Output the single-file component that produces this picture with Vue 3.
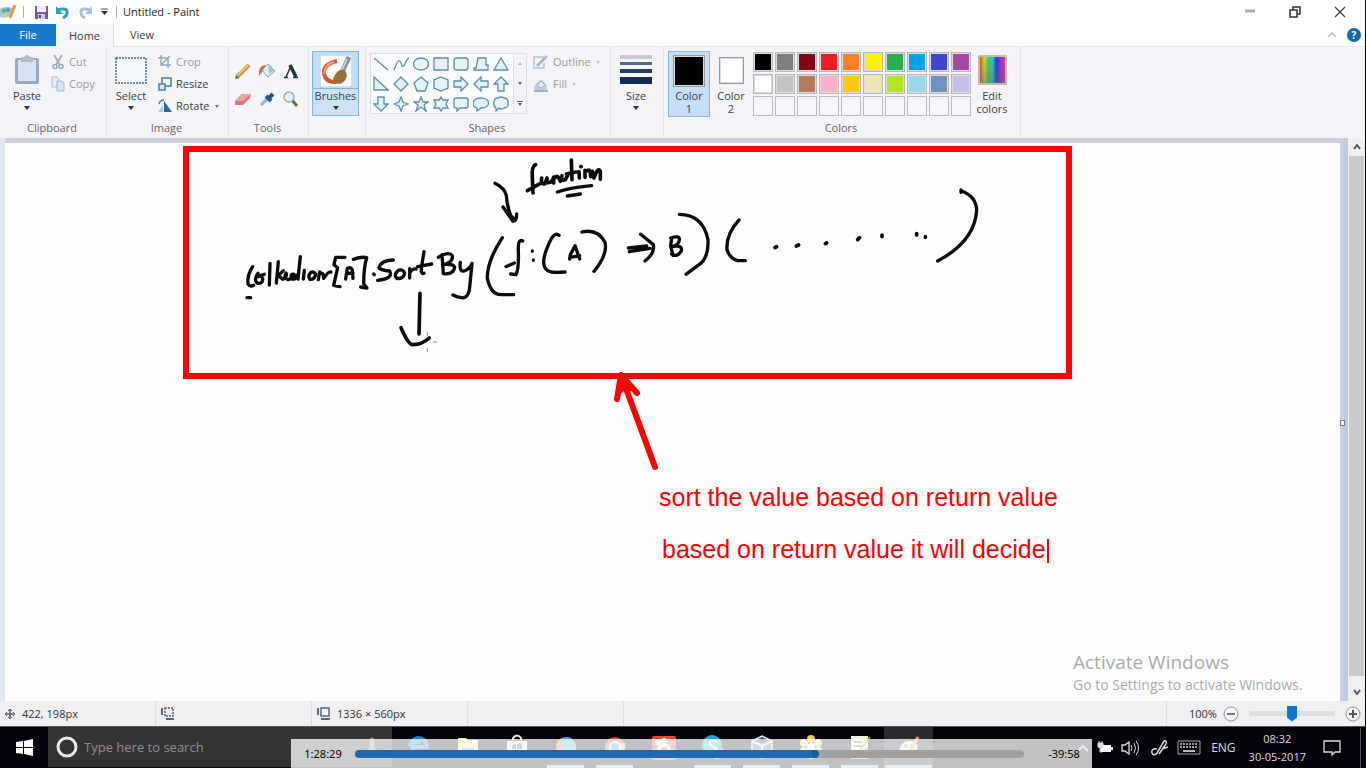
<script setup>
import { ref } from 'vue'

const search = ref('')
const zoom = ref(50)
const position = ref(69)

const shapes = [
  'M1 2 L15 14',
  'M1 14 C6 -1 8 6 9 10 C12 12 13 2 16 2',
  'M8 2 C18 2 18 14 8 14 C-2 14 -2 2 8 2Z',
  'M1 2 H15 V14 H1Z',
  'M4 2 H12 Q15 2 15 5 V11 Q15 14 12 14 H4 Q1 14 1 11 V5 Q1 2 4 2Z',
  'M5 2 H13 V9 H15 V14 H1 V12 H3Z',
  'M8 2 L15 14 H1Z',
  'M1 1 V14 H15Z',
  'M8 1 L15 8 L8 15 L1 8Z',
  'M8 1 L15 7 L12 15 H4 L1 7Z',
  'M8 1 L15 4 V12 L8 15 L1 12 V4Z',
  'M1 5 H8 V1 L15 8 L8 15 V11 H1Z',
  'M15 5 H8 V1 L1 8 L8 15 V11 H15Z',
  'M5 15 V8 H1 L8 1 L15 8 H11 V15Z',
  'M5 1 V8 H1 L8 15 L15 8 H11 V1Z',
  'M8 1 L10 6 L15 8 L10 10 L8 15 L6 10 L1 8 L6 6Z',
  'M8 1 L10 6 H15 L11 9 L13 15 L8 11 L3 15 L5 9 L1 6 H6Z',
  'M8 1 L10 4 H15 L13 8 L15 12 H10 L8 15 L6 12 H1 L3 8 L1 4 H6Z',
  'M3 2 H13 Q15 2 15 4 V10 Q15 12 13 12 H7 L4 15 V12 H3 Q1 12 1 10 V4 Q1 2 3 2Z',
  'M8 2 C18 2 18 12 8 12 L4 15 V12 C-2 10 -1 2 8 2Z',
  'M5 2 Q8 0 11 2 Q15 2 15 6 Q16 12 11 12 Q8 14 6 12 L3 15 V12 Q0 10 1 6 Q1 2 5 2Z',
]

const palette = [
  '#000000', '#7f7f7f', '#880015', '#ed1c24', '#ff7f27', '#fff200', '#22b14c', '#00a2e8', '#3f48cc', '#a349a4',
  '#ffffff', '#c3c3c3', '#b97a57', '#ffaec9', '#ffc90e', '#efe4b0', '#b5e61d', '#99d9ea', '#7092be', '#c8bfe7',
  '', '', '', '', '', '', '', '', '', '',
]

const apps = [
  { name: 'Edge', icon: 'edge' },
  { name: 'File Explorer', icon: 'folder' },
  { name: 'Store', icon: 'store' },
  { name: 'Firefox', icon: 'firefox', open: true },
  { name: 'Chrome', icon: 'chrome', open: true },
  { name: 'Recorder', icon: 'recorder' },
  { name: 'Skype', icon: 'skype', open: true },
  { name: 'VirtualBox', icon: 'box', open: true },
  { name: 'Flower', icon: 'flower', open: true },
  { name: 'Notepad', icon: 'notepad', open: true },
  { name: 'Paint', icon: 'paint', open: true, active: true },
]
</script>

<template>
  <div class="screen">
    <div class="window">
      <header class="titlebar">
        <svg class="app-icon" width="18" height="18" viewBox="0 0 18 18">
          <path d="M0 6 Q6 2 12 5 Q13 13 5 15 L0 14Z" fill="#a9c6cf" />
          <circle cx="4" cy="8" r="2" fill="#68a874" /><circle cx="8" cy="7" r="2" fill="#5797c9" /><circle cx="5" cy="12" r="2" fill="#d8d28e" />
          <path d="M10 15 L15 2" stroke="#dc9b3d" stroke-width="3" />
        </svg>
        <i class="bar"></i>
        <button class="plain quick" aria-label="Save">
          <svg width="15" height="15" viewBox="0 0 15 15"><path d="M1 1H14V14H1Z" fill="#7957a5" /><path d="M3 1H12V7H3Z" fill="#f3effa" /><path d="M4 9H11V14H4Z" fill="#d8cce9" /><path d="M5 10H7V13H5Z" fill="#584081" /></svg>
        </button>
        <button class="plain quick" aria-label="Undo">
          <svg width="16" height="15" viewBox="0 0 16 15"><path d="M3 5 Q13 2 12 8 Q12 11 8 13" fill="none" stroke="#2e9bd0" stroke-width="3" /><path d="M1 1 V9 H8Z" fill="#2e9bd0" /></svg>
        </button>
        <button class="plain quick" aria-label="Redo">
          <svg width="16" height="15" viewBox="0 0 16 15"><path d="M13 5 Q3 2 4 8 Q4 11 8 13" fill="none" stroke="#a9bfd2" stroke-width="3" /><path d="M15 1 V9 H8Z" fill="#a9bfd2" /></svg>
        </button>
        <button class="plain more" aria-label="Customize toolbar">
          <svg width="7" height="8" viewBox="0 0 7 8"><path d="M0 1H7" stroke="#555" /><path d="M0 3H7L3.5 7Z" fill="#333" /></svg>
        </button>
        <i class="bar"></i>
        <h1>Untitled - Paint</h1>
        <div class="controls">
          <button class="plain" aria-label="Minimize"><svg width="12" height="12" viewBox="0 0 12 12"><path d="M1 5H11" stroke="#aaa" stroke-width="3" /></svg></button>
          <button class="plain" aria-label="Restore"><svg width="12" height="12" viewBox="0 0 12 12"><path d="M1 4H8V11H1ZM4 4V1H11V8H8" fill="none" stroke="#333" stroke-width="1.5" /></svg></button>
          <button class="plain" aria-label="Close"><svg width="12" height="12" viewBox="0 0 12 12"><path d="M1 1L11 11M11 1L1 11" stroke="#444" stroke-width="1.4" /></svg></button>
        </div>
      </header>

      <nav class="tabs">
        <button class="plain file">File</button>
        <button class="plain home">Home</button>
        <button class="plain view">View</button>
        <div class="tab-end">
          <button class="plain" aria-label="Collapse ribbon"><svg width="10" height="6" viewBox="0 0 10 6"><path d="M1 5L5 1L9 5" fill="none" stroke="#b5b5ba" stroke-width="1.4" /></svg></button>
          <button class="plain help" aria-label="Help">?</button>
        </div>
      </nav>

      <section class="ribbon">
        <div class="group clipboard">
          <div class="body">
            <button class="plain big">
              <span class="pic"><svg width="26" height="32" viewBox="0 0 26 32"><rect x="1" y="4" width="24" height="26" rx="2" fill="#9ca8c2" /><path d="M4 6H22V27H4Z" fill="#d5e3f5" /><path d="M7 3H10Q13 -1 16 3H19V8H7Z" fill="#b2bbcd" /></svg></span>
              <span>Paste</span><i class="caret"></i>
            </button>
            <div class="rows faded">
              <button class="plain row"><svg width="14" height="16" viewBox="0 0 14 16"><path d="M3 1L9 11M11 1L5 11" stroke="#a3aec0" stroke-width="1.8" /><circle cx="4" cy="12.500" r="2" fill="none" stroke="#98a5bb" stroke-width="1.5" /><circle cx="10" cy="12.500" r="2" fill="none" stroke="#98a5bb" stroke-width="1.5" /></svg>Cut</button>
              <button class="plain row"><svg width="14" height="16" viewBox="0 0 14 16"><path d="M1 1H6L8 4V11H1Z" fill="#e8eef7" stroke="#b2bdcf" /><path d="M6 5H11L13 8V15H6Z" fill="#dce5f2" stroke="#a5b2c8" /></svg>Copy</button>
            </div>
          </div>
          <div class="caption">Clipboard</div>
        </div>

        <div class="group image">
          <div class="body">
            <button class="plain big">
              <span class="pic"><svg width="32" height="28" viewBox="0 0 32 28"><rect x="1" y="2" width="30" height="25" fill="#f5f9fe" stroke="#396fa2" stroke-width="1.500" stroke-dasharray="2 1" /></svg></span>
              <span>Select</span><i class="caret"></i>
            </button>
            <div class="rows">
              <button class="plain row dim"><svg width="14" height="14" viewBox="0 0 14 14"><path d="M3 0V10H13M0 3H10V13M3 10L12 1" fill="none" stroke="#91a6c0" stroke-width="1.5" /></svg>Crop</button>
              <button class="plain row"><svg width="14" height="14" viewBox="0 0 14 14"><path d="M4 1H13V9H4Z" fill="#fff" stroke="#397eb5" stroke-width="1.5" /><path d="M1 7H7V13H1Z" fill="#dceaf8" stroke="#397eb5" stroke-width="1.500" /></svg>Resize</button>
              <button class="plain row"><svg width="14" height="14" viewBox="0 0 14 14"><path d="M6 2L14 13H6Z" fill="#286a9e" /><path d="M5 6V13H0Z" fill="#a6c9e5" /><path d="M1 5Q2 1 6 1" fill="none" stroke="#397eb5" stroke-width="1.500" /></svg>Rotate <i class="caret"></i></button>
            </div>
          </div>
          <div class="caption">Image</div>
        </div>

        <div class="group tools">
          <div class="body tool-grid">
            <button class="plain" aria-label="Pencil"><svg width="18" height="18" viewBox="0 0 18 18"><path d="M3 15L15 3" stroke="#c79548" stroke-width="4" /><path d="M3 14L14 3" stroke="#f1ce85" stroke-width="1.5" /><path d="M1 17L2 13L5 16Z" fill="#715c48" /></svg></button>
            <button class="plain" aria-label="Fill"><svg width="18" height="18" viewBox="0 0 18 18"><path d="M4 8L10 2L17 9L10 15Z" fill="#e5eff8" stroke="#819db8" /><path d="M10 2Q14 4 16 9L11 12Z" fill="#9fc3df" /><path d="M8 3Q2 3 1 9V14Q5 10 6 6Z" fill="#d86a4f" /></svg></button>
            <button class="plain" aria-label="Text"><svg width="18" height="18" viewBox="0 0 18 18"><path d="M4 15L9 4" fill="none" stroke="#1e2d48" stroke-width="1.500" /><path d="M8 3L14 15" stroke="#1e2d48" stroke-width="3.500" /><path d="M2 15.500H6M11 15.500H16" stroke="#1e2d48" stroke-width="1.500" /></svg></button>
            <button class="plain" aria-label="Eraser"><svg width="18" height="18" viewBox="0 0 18 18"><path d="M1 11L8 4L17 4L16 8L9 15L1 15Z" fill="#d97880" /><path d="M1 11L8 4L17 4L9 11Z" fill="#f1a2a5" /></svg></button>
            <button class="plain" aria-label="Color picker"><svg width="18" height="18" viewBox="0 0 18 18"><path d="M3 15L10 8" stroke="#91b7d8" stroke-width="3" /><path d="M8 6L13 11M11 8L15 4" stroke="#275983" stroke-width="4" /></svg></button>
            <button class="plain" aria-label="Magnifier"><svg width="18" height="18" viewBox="0 0 18 18"><path d="M10 10L15 16" stroke="#77604a" stroke-width="3" /><circle cx="7" cy="7" r="5" fill="#e2f0fa" stroke="#9cabb9" stroke-width="1.5" /></svg></button>
          </div>
          <div class="caption">Tools</div>
        </div>

        <div class="group brush-group">
          <div class="body">
            <button class="plain big brushes">
              <span class="pic"><svg width="32" height="32" viewBox="0 0 32 32"><path d="M0 0H32V32H0Z" fill="#fff" stroke="#aac0d8" /><path d="M17 6Q3 9 4 19Q6 28 17 27" fill="none" stroke="#d95730" stroke-width="4" /><path d="M14 7Q5 9 4 19" fill="none" stroke="#f1a17d" stroke-width="2" /><path d="M22 17L29 2" stroke="#8694aa" stroke-width="5" /><path d="M21 17L27 4" stroke="#d5dbe5" stroke-width="1.500" /><path d="M13 24Q17 13 25 15Q30 24 20 29Q15 29 13 24Z" fill="#97703f" /></svg></span>
              <span>Brushes</span><i class="caret"></i>
            </button>
          </div>
        </div>

        <div class="group shapes">
          <div class="body">
            <div class="gallery">
              <div class="shape-grid">
                <button v-for="(d, i) in shapes" :key="i" class="plain" :aria-label="'Shape ' + (i + 1)">
                  <svg width="16" height="16" viewBox="0 0 16 16"><path :d="d" :class="{ open: i < 2 }" /></svg>
                </button>
              </div>
              <div class="gallery-bar">
                <button class="plain" aria-label="Previous shapes"><i class="caret up"></i></button>
                <button class="plain" aria-label="Next shapes"><i class="caret"></i></button>
                <button class="plain last" aria-label="All shapes"><i class="caret"></i></button>
              </div>
            </div>
            <div class="rows faded">
              <button class="plain row"><svg width="16" height="14" viewBox="0 0 16 14"><path d="M11 2H1V13H11V8" fill="none" stroke="#b8c2d1" stroke-width="1.5" /><path d="M4 11L14 1" stroke="#a8b6c8" stroke-width="2.5" /></svg>Outline <i class="caret"></i></button>
              <button class="plain row"><svg width="16" height="15" viewBox="0 0 16 15"><path d="M1 14V9L8 2L14 8V14Z" fill="#c4cfdd" /><path d="M4 9L8 4L12 8L8 11Z" fill="#e8eef5" stroke="#9eafc4" /><path d="M1 14H15" stroke="#9eafc4" stroke-width="2" /></svg>Fill <i class="caret"></i></button>
            </div>
          </div>
          <div class="caption">Shapes</div>
        </div>

        <div class="group size">
          <div class="body">
            <button class="plain big">
              <span class="pic"><svg width="32" height="30" viewBox="0 0 32 30"><path d="M0 2H32" stroke="#c6c9d1" stroke-width="4" /><path d="M0 8.500H32" stroke="#506b80" stroke-width="3" /><path d="M0 16H32" stroke="#243e68" stroke-width="4" /><path d="M0 25.500H32" stroke="#152d55" stroke-width="7" /></svg></span>
              <span>Size</span><i class="caret"></i>
            </button>
          </div>
        </div>

        <div class="group colors">
          <div class="body">
            <button class="plain big color-pick chosen"><span class="pic"><i class="swatch one"></i></span><span>Color<br>1</span></button>
            <button class="plain big color-pick"><span class="pic"><i class="swatch two"></i></span><span>Color<br>2</span></button>
            <div class="palette">
              <button v-for="(c, i) in palette" :key="i" class="plain" :class="{ empty: !c }" :style="{ backgroundColor: c || null }" :aria-label="'Palette color ' + (i + 1)"></button>
            </div>
            <button class="plain big edit"><span class="pic"><i class="spectrum"></i></span><span>Edit<br>colors</span></button>
          </div>
          <div class="caption">Colors</div>
        </div>
      </section>

      <main class="workspace">
        <div class="canvas">
          <svg class="ink" width="1335" height="558" viewBox="5 143 1335 558">
            <g fill="none" stroke="#0b0b0b" stroke-linecap="round" stroke-linejoin="round">
              <g transform="translate(230 150) scale(.33333)" stroke-width="10">
                <path d="M68 350Q51 375 54 402Q60 412 71 406M51 443H62" />
                <path d="M84 370Q70 389 82 400Q99 402 98 386Q93 374 84 380L103 373M120 340L118 405" />
                <path d="M145 335L139 399M160 362L145 377L158 388Q174 377 168 369Q160 386 174 389Q188 387 192 373Q180 370 184 386Q195 392 202 375M211 320L204 387M223 361L220 387" />
                <path d="M242 368Q232 379 240 388Q255 389 257 372Q250 363 242 368M265 389L269 366M267 374Q280 361 281 385Q296 363 303 366" />
                <path d="M345 322H317L312 344L323 353L311 406L330 410M347 387L352 355Q364 350 367 360L369 385M350 371L369 369" />
                <path d="M370 328Q395 319 410 323Q401 354 401 401L411 414L392 411M431 372L433 374" />
                <path d="M490 330Q452 331 447 354Q454 361 479 363Q491 386 443 391M505 361Q489 376 501 385Q521 388 524 369Q518 356 505 361M539 356V384M539 368Q549 354 558 357" />
                <path d="M582 305L575 348Q571 375 582 370M563 350L605 342M636 314L640 370M625 322Q657 303 667 317Q670 335 645 343Q671 341 674 352Q671 375 640 371M691 337Q687 367 703 363Q721 357 726 340Q722 384 718 421Q711 447 694 443Q679 441 669 435" />
                <path stroke-width="11" d="M570 430L567 552M513 533Q534 582 548 584Q576 584 598 564" />
                <path stroke="#aaa" stroke-width="4" d="M592 548V557M592 595V604M611 576H620" />
              </g>
              <g transform="translate(470 150) scale(.33333)" stroke-width="10">
                <path stroke-width="11" d="M197 44Q184 50 187 82L189 129M172 122L210 101" />
                <path stroke-width="11" d="M215 84Q211 104 225 101L231 84V98Q248 99 251 81V99M253 85Q263 70 271 94L276 77Q272 94 286 89L293 76M304 30L306 89M289 72L318 66M327 65L328 84M332 50H334M345 61V82M352 62Q362 55 362 80M367 64L372 84Q384 50 391 63V88" />
                <path d="M262 126Q310 111 365 107M292 138L331 132M75 100Q104 114 109 137Q112 180 130 213M99 171L129 214Q140 213 140 192M104 178L132 207" />
                <path d="M97 263Q51 333 52 385Q63 435 94 434H131M158 273Q143 264 145 304Q147 358 138 374L122 372M108 350L133 339M187 303V304M190 330V331" />
                <path d="M267 256Q251 242 233 290Q209 345 233 362Q249 370 285 366M299 327L301 314L315 287L329 327M300 322L329 317M336 246Q383 235 405 277Q414 313 372 364" />
                <path d="M475 294L530 288M478 305L540 295M512 253L550 284Q555 310 525 333M605 264L602 288L609 316M602 264Q634 254 627 274Q622 288 605 290Q638 283 634 303Q622 323 605 312M628 193Q699 194 714 269Q716 328 684 346L648 373" />
              </g>
              <g transform="translate(700 170) scale(.33333)" stroke-width="10">
                <path d="M117 150Q78 191 81 239Q90 266 112 272H136M784 63Q829 79 830 121Q824 214 713 273M783 60V67" />
                <path stroke-width="11" d="M225 233L230 230M289 228L296 225M376 221L380 219M473 209L479 203M546 195V200M650 191V195M676 200V202" />
              </g>
            </g>
            <rect x="186" y="149" width="883" height="227" fill="none" stroke="#f00" stroke-width="6" />
            <path d="M655 467L621 375M617 399L621 375L637 393" fill="none" stroke="#f00" stroke-width="6" stroke-linecap="round" stroke-linejoin="round" />
            <path d="M621 375L617 397L624 391L635 391Z" fill="#f00" />
          </svg>
          <p class="note first">sort the value based on return value</p>
          <p class="note second">based on return value it will decide<i class="cursor"></i></p>
          <div class="watermark"><strong>Activate Windows</strong><span>Go to Settings to activate Windows.</span></div>
        </div>
        <div class="gutter"><i></i></div>
        <div class="scroll">
          <button class="plain" aria-label="Scroll up"><svg width="8" height="6" viewBox="0 0 8 6"><path d="M1 5L4 1L7 5" fill="none" stroke="#555" stroke-width="2" /></svg></button>
          <i class="thumb"></i>
          <button class="plain down" aria-label="Scroll down"><svg width="8" height="6" viewBox="0 0 8 6"><path d="M1 1L4 5L7 1" fill="none" stroke="#555" stroke-width="2" /></svg></button>
        </div>
      </main>

      <footer class="status">
        <div class="cell"><svg width="12" height="12" viewBox="0 0 12 12"><path d="M6 1V11M1 6H11" stroke="#596777" stroke-width="1.500" /><path d="M4 3L6 1L8 3M4 9L6 11L8 9M3 4L1 6L3 8M9 4L11 6L9 8" fill="none" stroke="#596777" /></svg>422, 198px</div>
        <div class="cell"><svg width="14" height="14" viewBox="0 0 14 14"><path d="M1 1V8M5 12H13" stroke="#526880" stroke-width="2" /><path d="M4 1H12V9H4Z" fill="none" stroke="#526880" stroke-width="1.500" stroke-dasharray="2 1" /></svg></div>
        <div class="cell"><svg width="14" height="14" viewBox="0 0 14 14"><path d="M1 1V8M4 12H13" stroke="#526880" stroke-width="2" /><path d="M4 1H12V9H4Z" fill="#fff" stroke="#526880" stroke-width="1.5" /></svg>1336 × 560px</div>
        <div class="cell"></div>
        <div class="cell rest"></div>
        <div class="zoom">
          <span>100%</span>
          <button class="plain" aria-label="Zoom out"><svg width="16" height="16" viewBox="0 0 16 16"><circle cx="8" cy="8" r="7" fill="#f7f7f7" stroke="#929292" /><path d="M4 8H12" stroke="#777" stroke-width="2" /></svg></button>
          <input v-model="zoom" type="range" aria-label="Zoom">
          <button class="plain" aria-label="Zoom in"><svg width="16" height="16" viewBox="0 0 16 16"><circle cx="8" cy="8" r="7" fill="#f7f7f7" stroke="#929292" /><path d="M4 8H12M8 4V12" stroke="#555" stroke-width="2" /></svg></button>
        </div>
      </footer>
    </div>

    <div class="taskbar">
      <button class="plain start" aria-label="Start"><svg width="17" height="17" viewBox="0 0 17 17"><path d="M0 3L7 2V8H0ZM8 2L17 0V8H8ZM0 9H7V15L0 14ZM8 9H17V17L8 15Z" fill="#fff" /></svg></button>
      <label class="search">
        <svg width="22" height="22" viewBox="0 0 22 22"><circle cx="11" cy="11" r="9" fill="none" stroke="#e8e8e8" stroke-width="3" /></svg>
        <input v-model="search" type="text" placeholder="Type here to search" aria-label="Search">
        <svg width="14" height="20" viewBox="0 0 14 20"><path d="M7 3V11" stroke="#888" stroke-width="5" stroke-linecap="round" /><path d="M2 10Q7 18 12 10M7 14V19" fill="none" stroke="#888" /></svg>
      </label>
      <div class="apps">
        <button v-for="app in apps" :key="app.icon" class="plain" :class="{ running: app.open, active: app.active }" :aria-label="app.name">
          <svg width="24" height="26" viewBox="0 0 24 26">
            <template v-if="app.icon === 'edge'"><path d="M4 13H20Q19 4 11 4Q5 5 3 12Q7 7 14 8M6 13Q5 25 20 21" fill="none" stroke="#1683d8" stroke-width="4" /></template>
            <template v-else-if="app.icon === 'folder'"><path d="M2 4H10L12 6H22V22H2Z" fill="#f3df94" /><path d="M6 14H18V22H15V18H9V22H6Z" fill="#55b5e7" /></template>
            <template v-else-if="app.icon === 'store'"><path d="M8 7V4Q12 -1 16 4V7" fill="none" stroke="#eee" stroke-width="2" /><path d="M2 7H22V24L2 22Z" fill="#f1f1f1" /><path d="M7 11L11 10V15H7ZM12 10L17 9V15H12ZM7 16H11V20L7 19ZM12 16H17V21L12 20Z" fill="#444" /></template>
            <template v-else-if="app.icon === 'firefox'"><circle cx="12" cy="13" r="10" fill="#ed923b" /><circle cx="13" cy="11" r="8" fill="#3b9fd1" /><path d="M4 5Q4 11 11 11L8 16Q14 22 20 13Q21 24 12 24Q0 22 4 5Z" fill="#e7773d" /></template>
            <template v-else-if="app.icon === 'chrome'"><circle cx="12" cy="13" r="10" fill="#db4437" /><path d="M3 8L10 24Q-1 20 3 8Z" fill="#369b5e" /><path d="M12 9H22Q24 22 11 24L17 14Z" fill="#f3c442" /><circle cx="12" cy="13" r="5" fill="#4285d4" stroke="#eee" stroke-width="2" /></template>
            <template v-else-if="app.icon === 'recorder'"><rect x="0" y="2" width="24" height="24" rx="2" fill="#e24a35" /><circle cx="12" cy="16" r="7" fill="#fff" /><circle cx="6" cy="8" r="3" fill="#fff" /><circle cx="12" cy="7" r="3" fill="#fff" /><circle cx="12" cy="16" r="3" fill="#e24a35" /></template>
            <template v-else-if="app.icon === 'skype'"><circle cx="11" cy="11" r="10" fill="#18a5dc" /><circle cx="16" cy="18" r="7" fill="#18a5dc" /><path d="M16 8Q13 5 9 8Q8 12 13 13Q17 15 14 18Q10 20 7 17" fill="none" stroke="#fff" stroke-width="2.500" /></template>
            <template v-else-if="app.icon === 'box'"><path d="M12 2L22 7V19L12 24L2 19V7Z" fill="#47627e" stroke="#e0e5ed" stroke-width="1.500" /><path d="M2 7L12 12L22 7M12 12V24" fill="none" stroke="#e0e5ed" stroke-width="2" /><path d="M6 7L12 4L18 7L12 10Z" fill="#172f5c" /></template>
            <template v-else-if="app.icon === 'flower'"><g fill="#f1c777"><circle cx="12" cy="5" r="4" /><circle cx="5" cy="9" r="4" /><circle cx="19" cy="9" r="4" /><circle cx="5" cy="17" r="4" /><circle cx="19" cy="17" r="4" /><circle cx="12" cy="21" r="4" /></g><circle cx="12" cy="13" r="4" fill="#fff3d3" /></template>
            <template v-else-if="app.icon === 'notepad'"><path d="M3 2H20V25H3Z" fill="#f3f1e0" /><path d="M3 17L20 13V25H3Z" fill="#97bd57" /><path d="M6 8H15M6 12H14" stroke="#65705a" stroke-width="2" /><path d="M12 16L22 3" stroke="#bd8743" stroke-width="2" /></template>
            <template v-else><path d="M2 16Q4 6 15 7Q24 10 19 19Q12 26 8 22Q9 18 4 20Z" fill="#ecebdc" /><circle cx="9" cy="12" r="2" fill="#65a9cc" /><circle cx="15" cy="12" r="2" fill="#94b46e" /><path d="M12 19L21 3" stroke="#e8a159" stroke-width="3" /></template>
          </svg>
        </button>
      </div>
      <div class="tray">
        <svg width="12" height="8" viewBox="0 0 12 8"><path d="M1 7L6 2L11 7" fill="none" stroke="#bbb" stroke-width="2" /></svg>
        <svg width="16" height="14" viewBox="0 0 16 14"><path d="M4 4H14V11H4ZM14 6H16V9H14Z" fill="#fff" /><path d="M1 2H6V6Q4 8 1 6ZM2 0V2M5 0V2M3 7V11H5" fill="#ddd" stroke="#ddd" /></svg>
        <svg width="18" height="16" viewBox="0 0 18 16"><path d="M1 5H4L8 2V14L4 11H1Z" fill="none" stroke="#ddd" stroke-width="1.3" /><path d="M10 5Q12 8 10 11M13 3Q16 8 13 13M15 1Q20 8 15 15" fill="none" stroke="#ddd" /></svg>
        <svg width="18" height="18" viewBox="0 0 18 18"><path d="M6 14L13 2Q16 1 15 5L8 15M6 10Q0 9 1 14Q3 18 7 13M11 10L17 8" fill="none" stroke="#ddd" stroke-width="1.5" /></svg>
        <svg width="24" height="15" viewBox="0 0 24 15"><path d="M1 1H23V14H1Z" fill="none" stroke="#aaa" /><path d="M3 4H21M3 7H21" stroke="#999" stroke-width="2" stroke-dasharray="2 1" /><path d="M6 11H18" stroke="#bbb" stroke-width="2" /></svg>
        <span class="lang">ENG</span>
        <time>08:32<br>30-05-2017</time>
        <svg width="18" height="18" viewBox="0 0 18 18"><path d="M1 2H17V13H12L9 16V13H1Z" fill="none" stroke="#ddd" stroke-width="1.3" /></svg>
        <i class="desktop"></i>
      </div>
      <div class="player">
        <span>1:28:29</span>
        <input v-model="position" type="range" aria-label="Playback position" :style="{ '--played': position + '%' }">
        <span class="left">-39:58</span>
      </div>
    </div>
  </div>
</template>

<style>
body { margin: 0; background: #000; }
</style>

<style scoped>
* { box-sizing: border-box; }
.screen { height: 100vh; display: flex; flex-direction: column; overflow: hidden; font: 11px/14px "Open Sans", "Noto Sans", sans-serif; color: #3d3d42; }
.window { flex: 1; min-height: 0; display: flex; flex-direction: column; margin-right: 1px; background: #fff; }
svg { display: block; flex: none; }
.plain { appearance: none; border: 0; padding: 0; margin: 0; background: none; font: inherit; color: inherit; display: flex; align-items: center; justify-content: center; }

.titlebar { height: 24px; display: flex; align-items: center; }
.bar { width: 1px; height: 12px; background: #aaa; }
.app-icon { margin-right: 5px; }
.quick { width: 22px; }
.titlebar .bar + .quick { margin-left: 6px; }
.more { width: 16px; margin-right: 4px; }
.titlebar h1 { margin: 0 0 0 6px; font: 11px/16px "Open Sans", sans-serif; color: #222; }
.controls { display: flex; margin-left: auto; padding-right: 3px; }
.controls button { width: 45px; height: 20px; }

.tabs { height: 23px; display: flex; border-bottom: 1px solid #e8e8ed; }
.tabs > button { width: 56px; }
.file { background: #1979ca; color: #fff; }
.tabs > .home { width: 58px; height: 23px; background: #f5f6fa; border-right: 1px solid #e1e1e8; }
.tab-end { margin-left: auto; display: flex; align-items: center; gap: 10px; padding-right: 4px; }
.help { width: 14px; height: 14px; border-radius: 50%; background: #1268b5; color: #fff; font-size: 10px; font-weight: bold; }

.ribbon { height: 91px; display: flex; background: #f4f4f9; }
.group { display: flex; flex-direction: column; justify-content: space-between; padding: 4px 0 3px; border-right: 1px solid #e6e6ed; }
.clipboard { width: 107px; }
.image { width: 122px; }
.tools { width: 80px; }
.brush-group { width: 57px; }
.shapes { width: 245px; }
.size { width: 53px; }
.colors { width: 357px; }
.body { display: flex; }
.caption { padding-right: 2px; text-align: center; color: #66666c; }
.big { flex-direction: column; justify-content: flex-start; width: 38px; }
.pic { height: 38px; display: flex; align-items: center; justify-content: center; }
.caret { width: 0; height: 0; border: 3px solid transparent; border-top: 4px solid #333; border-bottom: 0; margin-top: 3px; }
.row .caret { border-width: 3px 2px 0; margin: 0 0 0 1px; opacity: .7; }
.rows { display: flex; flex-direction: column; align-items: flex-start; }
.row { height: 22px; gap: 4px; }
.faded, .dim { color: #9a9aa0; }
.faded .caret { border-top-color: #aaa; }
.clipboard .body { padding-left: 8px; gap: 5px; }
.image .body { padding-left: 4px; gap: 7px; }
.image .big { width: 40px; }
.tools .tool-grid { display: grid; grid-template-columns: repeat(3, 24px); grid-auto-rows: 28px; padding: 6px 0 0 2px; }
.brush-group .body { padding-left: 3px; }
.brushes { width: 47px; height: 65px; border: 1px solid #85b3df; background: linear-gradient(#bfdcf8 36px, #85b3df 36px, #85b3df 37px, #cce2f8 37px); }
.brushes .pic { height: 37px; }

.shapes .body { padding-left: 4px; gap: 6px; }
.gallery { display: flex; width: 157px; height: 61px; margin-top: 2px; border: 1px solid #dcdfe8; background: #fbfcfe; }
.shape-grid { display: grid; grid-template-columns: repeat(7, 20px); grid-auto-rows: 20px; width: 142px; }
.shape-grid path { fill: #e4f2fa; stroke: #5c8dac; stroke-width: 1.3; }
.shape-grid path.open { fill: none; }
.gallery-bar { display: grid; grid-template-rows: repeat(3, 1fr); width: 13px; border-left: 1px solid #dcdfe8; background: #f4f4f9; }
.gallery-bar .caret { border-width: 3px 2px 0; margin: 0; border-top-color: #555b68; }
.gallery-bar .up { transform: rotate(180deg); opacity: .4; }
.last { flex-direction: column; gap: 1px; }
.last::before { content: ""; width: 6px; height: 1px; background: #555b68; }
.size .body { padding-left: 6px; }

.colors .body { padding-left: 4px; }
.color-pick { width: 42px; height: 66px; line-height: 13px; border: 1px solid transparent; }
.color-pick .pic { height: 37px; }
.chosen { background: #c5dff8; border-color: #8cb7df; }
.swatch { display: block; border: 1px solid #999; box-shadow: inset 0 0 0 1px #ddd; }
.one { width: 32px; height: 32px; background: #000; }
.two { width: 25px; height: 27px; background: #fff; }
.palette { display: grid; grid-template-columns: repeat(10, 20px); grid-auto-rows: 20px; gap: 2px; margin: 1px 0 0 1px; }
.palette button { border: 1px solid #b8b8be; box-shadow: inset 0 0 0 1px #dcdce0; }
.palette .empty { background: #f6f6fa; box-shadow: none; }
.edit { width: 42px; line-height: 13px; }
.spectrum { width: 29px; height: 30px; border: 2px solid #c5b9b4; background: linear-gradient(transparent, rgba(100, 100, 100, .45)), linear-gradient(90deg, #d55335, #ded72e, #39d348, #28cad3, #243cd2, #a62ae2, #ed2e91); }

.workspace { flex: 1; min-height: 0; display: flex; background: #c9cfdf; box-shadow: inset 5px 0 #e0e6f3; }
.canvas { flex: 1; position: relative; margin: 5px 0 0 5px; background: #fefefe; overflow: hidden; }
.ink { position: absolute; left: 0; top: 0; }
.note { position: absolute; margin: 0; font: 25px/30px "Liberation Sans", Arial, sans-serif; color: #f00; white-space: nowrap; }
.first { left: 654px; top: 339px; }
.second { left: 657px; top: 391px; }
.cursor { display: inline-block; width: 2px; height: 24px; margin-left: 1px; background: #f00; vertical-align: -5px; }
.watermark { position: absolute; left: 1068px; bottom: 7px; display: flex; flex-direction: column; color: #aaa; font-size: 14px; line-height: 18px; white-space: nowrap; }
.watermark strong { font-size: 19px; line-height: 28px; font-weight: normal; }
.gutter { width: 8px; display: flex; align-items: center; padding-top: 7px; background: linear-gradient(90deg, #cbd2e3, #bcc8df); }
.gutter i { width: 5px; height: 6px; background: #fff; border: 1px solid #777; }
.scroll { width: 17px; display: flex; flex-direction: column; align-items: center; background: #f0f0f2; }
.scroll button { width: 17px; height: 18px; }
.thumb { flex: 1; width: 15px; background: #cbcbce; }
.scroll .down { height: 25px; padding-top: 7px; }

.status { height: 25px; display: flex; background: #f0eff2; color: #333; }
.cell { width: 156px; display: flex; align-items: center; gap: 6px; padding-left: 5px; border-right: 1px solid #dddde0; }
.cell:first-child { padding-left: 4px; }
.cell.rest { flex: 1; }
.zoom { width: 198px; display: flex; align-items: center; gap: 6px; padding: 0 4px 0 22px; }
.zoom input { appearance: none; flex: 1; min-width: 0; height: 16px; margin: 0 4px; background: linear-gradient(transparent 5px, #dedee0 5px, #dedee0 10px, transparent 10px); }
.zoom input::-webkit-slider-thumb { appearance: none; width: 10px; height: 16px; background: #0b77d3; clip-path: polygon(0 0, 100% 0, 100% 75%, 50% 100%, 0 75%); }

.taskbar { position: relative; height: 42px; display: flex; background: #02030b; border-top: 1px solid #555; color: #ddd; }
.start { width: 48px; }
.search { width: 344px; height: 40px; display: flex; align-items: center; gap: 6px; padding: 0 13px 0 8px; background: #333334; }
.search input { flex: 1; min-width: 0; border: 0; outline: 0; background: none; padding: 0; font: 13px/18px "Open Sans", sans-serif; color: #ddd; }
.search input::placeholder { color: #8f8f8f; opacity: 1; }
.apps { display: flex; padding-left: 2px; }
.apps button { width: 49px; padding-bottom: 2px; }
.running { background: linear-gradient(#8ebbe0, #8ebbe0) center bottom / 37px 3px no-repeat; }
.apps .active { background: linear-gradient(#8ebbe0, #8ebbe0) center bottom / 47px 3px no-repeat #292b31; }
.tray { display: flex; align-items: center; margin-left: auto; gap: 8px; padding-right: 5px; font-size: 12px; }
.tray svg:nth-of-type(4) { margin-left: 4px; }
.lang { margin-left: 2px; }
.tray time { text-align: center; font-size: 11px; line-height: 18px; margin: 0 9px 0 5px; }
.desktop { width: 1px; height: 40px; margin-left: 11px; background: #555; }
.player { position: absolute; left: 291px; right: 274px; bottom: 0; height: 29px; display: flex; align-items: center; background: rgba(255, 255, 255, .76); color: #000; font: 11px/14px "Noto Sans", "Open Sans", sans-serif; }
.player span { width: 64px; text-align: center; }
.player .left { width: 68px; padding-left: 12px; }
.player input { appearance: none; flex: 1; min-width: 0; height: 8px; margin: 0; border-radius: 4px; background: linear-gradient(90deg, #2068af var(--played), #a0a0a0 var(--played)); }
.player input::-webkit-slider-thumb { appearance: none; width: 8px; height: 8px; border-radius: 4px; background: #1a5c9d; }
</style>
